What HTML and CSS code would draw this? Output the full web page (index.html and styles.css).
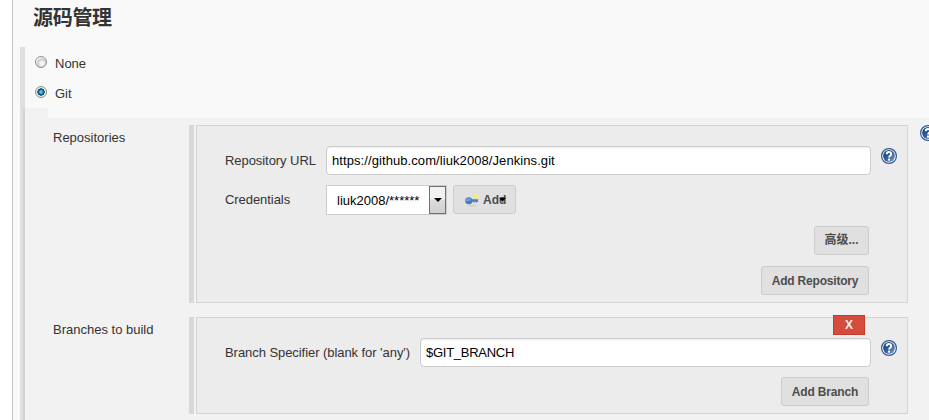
FILE: index.html
```html
<!DOCTYPE html>
<html lang="zh-CN">
<head>
<meta charset="utf-8">
<title>源码管理</title>
<link rel="stylesheet" href="styles.css">
</head>
<body>
<svg class="defs" aria-hidden="true">
  <defs>
    <linearGradient id="blue" x1="0" y1="0" x2="1" y2="1">
      <stop offset="0" stop-color="#173a7c"/><stop offset=".5" stop-color="#315b9b"/><stop offset="1" stop-color="#86a8d2"/>
    </linearGradient>
    <symbol id="help" viewBox="0 0 16 16">
      <circle cx="8" cy="8" r="7.4" fill="#fff" stroke="#2e568f" stroke-width="1.2"/>
      <circle cx="8" cy="8" r="5.9" fill="url(#blue)"/>
      <path d="M5.7 6.2C5.8 3.3 10.3 3.4 10.2 6.1C10.1 7.7 8.1 7.8 8.1 9.5" fill="none" stroke="#fff" stroke-width="1.9"/>
      <rect x="7" y="10.6" width="2" height="2" fill="#fff"/>
    </symbol>
  </defs>
</svg>
<main class="config">
  <h1 class="title">源码管理</h1>
  <section class="scm">
    <label class="choice"><span class="radio"></span><span class="choice-text">None</span></label>
    <label class="choice"><span class="radio radio-on"></span><span class="choice-text">Git</span></label>
    <div class="tab"></div>
    <div class="details">
      <div class="row">
        <div class="name">Repositories</div>
        <div class="handle"></div>
        <div class="box">
          <div class="line">
            <span class="label label-url">Repository URL</span>
            <div class="input input-url">https://github.com/liuk2008/Jenkins.git</div>
            <svg class="help"><use href="#help"/></svg>
          </div>
          <div class="line line-cred">
            <span class="label label-cred">Credentials</span>
            <div class="select"><span class="value">liuk2008/******</span><span class="arrow"><svg width="8" height="4" viewBox="0 0 8 4"><path d="M0 0H8L4 4Z"/></svg></span></div>
            <div class="button button-add">
              <svg class="key" viewBox="0 0 16 16">
                <ellipse cx="7.5" cy="13.6" rx="5.5" ry=".7" fill="#cacaca"/>
                <circle cx="11.6" cy="3.4" r="2.6" fill="#f3e99a"/>
                <circle cx="11.6" cy="3.4" r="1.6" fill="#fff04a"/>
                <path d="M6 6.6H14V9.2H12.8V10.2H11.5V9.2H10.3V10.2H9V9.2H6Z" fill="#557fad"/>
                <ellipse cx="4.1" cy="8.2" rx="3.9" ry="3.8" fill="#477bbd"/>
                <ellipse cx="4" cy="6.9" rx="2.7" ry="1.6" fill="#6c99d0"/>
                <circle cx="2" cy="7.8" r=".6" fill="#b5cce6"/>
              </svg>
              <span class="add">Add</span>
              <svg class="caret" viewBox="0 0 7 5"><path d="M0 .7H7L3.5 4.7Z"/></svg>
            </div>
          </div>
          <div class="actions actions-adv"><div class="button button-zh">高级...</div></div>
          <div class="actions"><div class="button button-repo">Add Repository</div></div>
        </div>
        <svg class="help help-row"><use href="#help"/></svg>
      </div>
      <div class="row row-branch">
        <div class="name">Branches to build</div>
        <div class="handle"></div>
        <div class="box">
          <div class="delete">X</div>
          <div class="line">
            <span class="label label-branch">Branch Specifier (blank for 'any')</span>
            <div class="input input-branch">$GIT_BRANCH</div>
            <svg class="help"><use href="#help"/></svg>
          </div>
          <div class="actions actions-branch"><div class="button button-branch">Add Branch</div></div>
        </div>
      </div>
    </div>
  </section>
</main>
</body>
</html>
```
FILE: styles.css
```css
* { box-sizing: border-box; }
body {
  margin: 0;
  height: 420px;
  overflow: hidden;
  background: #fff;
  color: #333;
  font: 13px/18px "Liberation Sans", "Noto Sans CJK SC", sans-serif;
}
.defs { position: absolute; width: 0; height: 0; }
.config {
  height: 420px;
  margin-left: 12px;
  padding-left: 7px;
  border-left: 1px solid #c5c5c5;
  background: #f9f9f9;
  overflow: hidden;
}
.title {
  height: 47px;
  margin: 0;
  padding: 3px 0 0 13px;
  font-size: 20px;
  line-height: 30px;
  font-weight: 700;
  letter-spacing: -0.3px;
}
.scm {
  height: 373px;
  padding-top: 1px;
  border-left: 5px solid #dfdfdf;
}
.choice { display: flex; align-items: center; height: 30px; padding-left: 10px; }
.choice-text { padding-top: 2px; }
.radio {
  width: 12px;
  height: 12px;
  margin: -3px 8px 0 0;
  border: 1px solid #8e8f8f;
  border-radius: 50%;
  background: radial-gradient(circle at 60% 65%, #f4f4f4 15%, #c5c9cd 55%, #f4f4f4 62%);
}
.radio-on { background: radial-gradient(circle 5px at center, #58c8f4 0 18%, #1b86bd 38%, #0c344f 68%, #eee 78%); }
.tab { width: 23px; height: 10px; background: #f2f2f2; box-shadow: -2px 0 #d3d3d3; }
.details {
  height: 302px;
  padding-top: 7px;
  background: #f2f2f2;
  box-shadow: -2px 0 #d3d3d3;
}
.row { display: flex; height: 178px; }
.row-branch { height: 97px; margin-top: 14px; }
.name { flex: none; width: 164px; padding: 4px 0 0 28px; }
.handle { flex: none; width: 5px; margin-right: 2px; background: #d8d8d8; }
.box {
  position: relative;
  flex: none;
  width: 712px;
  padding: 20px 0 0 28px;
  border: 1px solid #d3d3d3;
  background: #ececec;
}
.line { display: flex; height: 29px; padding-right: 10px; }
.line-cred { margin-top: 10px; }
.label { flex: none; padding-top: 6px; white-space: nowrap; letter-spacing: -0.06px; }
.label-url { width: 101px; }
.label-cred { width: 101px; }
.label-branch { width: 195px; }
.input {
  flex: 1;
  height: 29px;
  padding: 0 5px;
  border: 1px solid #ccc;
  border-radius: 4px;
  background: #fff;
  box-shadow: inset 0 1px 1px #eee;
  color: #000;
  line-height: 27px;
}
.input-url { letter-spacing: 0.08px; }
.input-branch { letter-spacing: -0.27px; }
.help { flex: none; width: 16px; height: 16px; margin: 2px 0 0 10px; }
.help-row { margin: 0 0 0 12px; }
.select { display: flex; width: 121px; height: 30px; border: 1px solid #ccc; background: #fff; color: #000; }
.value { width: 102px; padding: 6px 0 0 10px; white-space: nowrap; }
.arrow {
  display: flex;
  align-items: center;
  justify-content: center;
  width: 17px;
  height: 28px;
  border: 1px solid #707070;
  background: linear-gradient(#f2f2f2 0 45%, #dcdcdc 50%, #cfcfcf);
}
.button {
  height: 29px;
  border: 1px solid #ccc;
  border-radius: 3px;
  background: #e0e0e0;
  color: #4d4d4d;
  font-size: 12px;
  font-weight: 700;
  line-height: 28px;
  text-align: center;
  white-space: nowrap;
}
.button-add { display: flex; width: 63px; margin-left: 6px; padding-left: 11px; }
.key { width: 15px; height: 15px; margin-top: 7px; }
.add { margin-left: 3px; }
.caret { width: 7px; height: 5px; margin: 11px 0 0 -7px; }
.actions { display: flex; justify-content: flex-end; height: 29px; margin: 11px 38px 0 0; }
.actions-adv { margin-top: 12px; }
.actions-branch { margin-top: 10px; }
.button-zh { width: 55px; line-height: 27px; }
.button-repo { width: 108px; letter-spacing: -0.2px; }
.button-branch { width: 88px; letter-spacing: -0.15px; }
.delete {
  position: absolute;
  top: -3px;
  right: 42px;
  width: 32px;
  height: 20px;
  border: 1px solid #c43c2c;
  background: #d54c3c;
  color: #eee;
  font-size: 12px;
  font-weight: 700;
  line-height: 18px;
  text-align: center;
}
```
